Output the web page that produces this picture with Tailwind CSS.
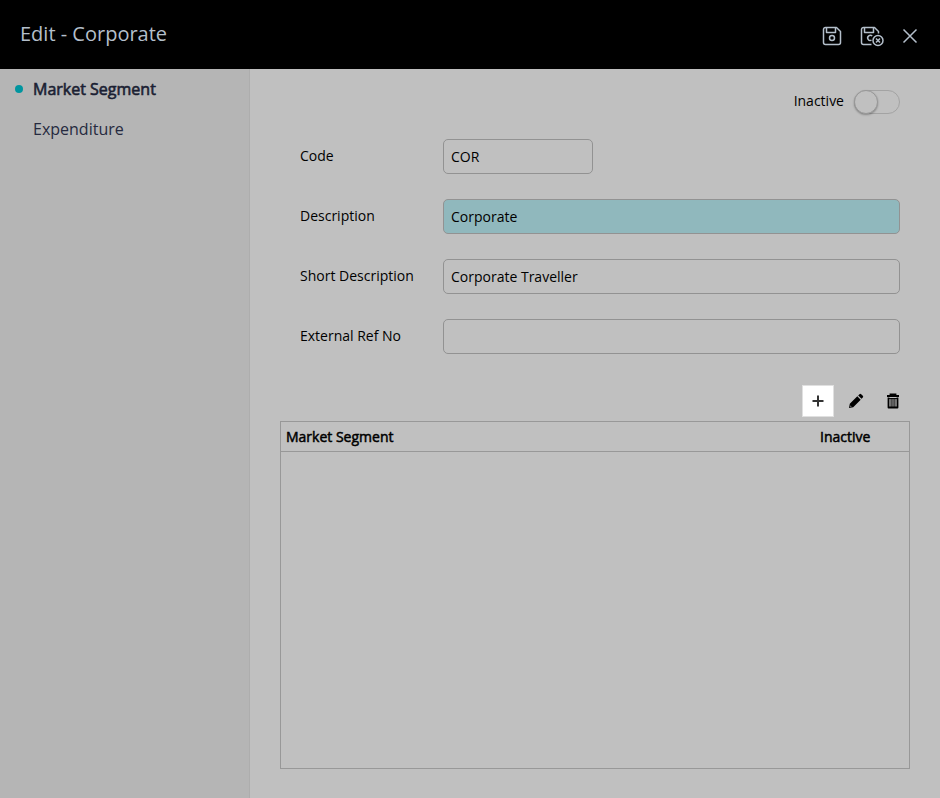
<!DOCTYPE html>
<html lang="en">
<head>
<meta charset="utf-8">
<meta name="viewport" content="width=device-width, initial-scale=1">
<title>Edit - Corporate</title>
<script src="https://cdn.jsdelivr.net/npm/@tailwindcss/browser@4"></script>
</head>
<body class="flex min-h-screen flex-col bg-[#c0c0c0] font-['Open_Sans','Noto_Sans',sans-serif] text-sm text-black">
  <header class="flex h-[69px] items-center justify-between bg-black pr-5 pl-5 text-[#b4bfcb]">
    <h1 class="pb-0.5 text-xl leading-7">Edit - Corporate</h1>
    <div class="flex items-center gap-4 pt-0.5">
      <button type="button" aria-label="Save" class="size-6">
        <svg class="size-6" viewBox="0 0 24 24" fill="none" stroke="currentColor" stroke-width="1.500" stroke-linejoin="round"><path d="M5.500 3.500H16.500L20.500 7.500V18.500a2 2 0 0 1-2 2H5.500a2 2 0 0 1-2-2V5.500a2 2 0 0 1 2-2Z"/><path d="M6.500 3.500V8.500H15.500V3.500"/><circle cx="12" cy="14" r="2.500"/></svg>
      </button>
      <button type="button" aria-label="Save and close" class="size-6">
        <svg class="size-6" viewBox="0 0 24 24" fill="none" stroke="currentColor" stroke-width="1.500" stroke-linejoin="round"><path d="M11.500 20.500H3.500a2 2 0 0 1-2-2V5.500a2 2 0 0 1 2-2H14.500L18.500 7.500V9.500"/><path d="M4.500 3.500V8.500H13.500V3.500"/><path d="M12.200 12.100A2.600 2.600 0 1 0 11.500 16.200"/><circle cx="18" cy="16.500" r="5"/><path d="M16 14.500l4 4m0-4l-4 4"/></svg>
      </button>
      <button type="button" aria-label="Close" class="size-5">
        <svg class="size-5" viewBox="0 0 20 20" fill="none" stroke="currentColor" stroke-width="1.500"><path d="M3.500 3.500l13 13m0-13l-13 13"/></svg>
      </button>
    </div>
  </header>

  <div class="flex grow">
    <nav aria-label="Sections" class="w-[250px] shrink-0 border-r border-[#adadad] bg-[#b5b5b5] text-base text-[#262a40]">
      <ul>
        <li><a href="#market-segment" aria-current="page" class="flex h-10 items-center gap-2.5 pl-[15px] text-[#1b1f33] [-webkit-text-stroke:0.6px]"><span class="size-2 rounded-full bg-[#00959f]"></span>Market Segment</a></li>
        <li><a href="#expenditure" class="flex h-10 items-center pl-[33px]">Expenditure</a></li>
      </ul>
    </nav>

    <main class="flex grow flex-col px-[30px] pb-[29px]">
      <form class="flex flex-col pr-2.5 pl-5">
        <div class="flex h-[70px] items-center justify-end gap-2.5 pb-1">
          <label for="inactive" class="pt-px pb-1">Inactive</label>
          <input id="inactive" type="checkbox" role="switch" class="flex h-6 w-[46px] appearance-none items-center rounded-full border border-[#a3a3a3] before:-ml-px before:size-6 before:rounded-full before:border before:border-[#989898] before:bg-[#c0c0c0] before:shadow-[0_1px_2px_rgba(0,0,0,0.3)] checked:justify-end">
        </div>
        <div class="grid grid-cols-[143px_1fr] gap-y-[25px]">
          <label for="code" class="pt-1.5 leading-[22px]">Code</label>
          <input id="code" type="text" value="COR" class="h-[35px] w-[150px] rounded-[5px] border border-[#929292] px-[7px]">
          <label for="description" class="pt-1.5 leading-[22px]">Description</label>
          <input id="description" type="text" value="Corporate" class="h-[35px] w-full rounded-[5px] border border-[#929292] bg-[#90b8bd] px-[7px]">
          <label for="short" class="pt-1.5 leading-[22px]">Short Description</label>
          <input id="short" type="text" value="Corporate Traveller" class="h-[35px] w-full rounded-[5px] border border-[#929292] px-[7px]">
          <label for="external" class="pt-1.5 leading-[22px]">External Ref No</label>
          <input id="external" type="text" class="h-[35px] w-full rounded-[5px] border border-[#929292] px-[7px]">
        </div>
      </form>

      <div class="mt-[31px] flex items-center justify-end gap-3.5 pr-[9px]">
        <button type="button" aria-label="Add" class="flex size-8 items-center justify-center border border-[#e0e0e0] bg-white text-[#333]">
          <svg class="size-4" viewBox="0 0 16 16" fill="none" stroke="currentColor" stroke-width="2"><path d="M8 2.500v11M2.500 8h11"/></svg>
        </button>
        <button type="button" aria-label="Edit" class="size-4">
          <svg class="size-4" viewBox="0 0 16 16" fill="currentColor"><path d="M1 15l.8-4.200L9.300 3.300l3.400 3.400-7.500 7.500ZM10.200 2.500l1.300-1.300a1.200 1.200 0 0 1 1.700 0l1.600 1.600a1.200 1.200 0 0 1 0 1.700l-1.300 1.300Z"/><path d="M2.200 13.800l.3-1.400 1.100 1.100Z" fill="#c0c0c0"/></svg>
        </button>
        <button type="button" aria-label="Delete" class="ml-[7px] size-4">
          <svg class="size-4" viewBox="0 0 16 16" fill="none" stroke="currentColor"><path d="M2 3h12M5.500 2.800V1.500h5v1.300" stroke-width="1.800"/><path d="M3.500 4.500v10h9v-10" stroke-width="1.800" stroke-linejoin="round"/><path d="M3 5.600h10M6.100 5v9.500M8 5v9.500M9.900 5v9.500" stroke-width="1"/></svg>
        </button>
      </div>

      <div class="mt-1 grow border border-[#989898]">
        <table class="w-full border-separate border-spacing-0">
          <thead>
            <tr class="h-[30px] text-left [-webkit-text-stroke:0.5px]">
              <th scope="col" class="border-b border-[#989898] px-[5px] font-normal">Market Segment</th>
              <th scope="col" class="w-[89px] border-b border-[#989898] font-normal">Inactive</th>
            </tr>
          </thead>
          <tbody></tbody>
        </table>
      </div>
    </main>
  </div>
</body>
</html>
